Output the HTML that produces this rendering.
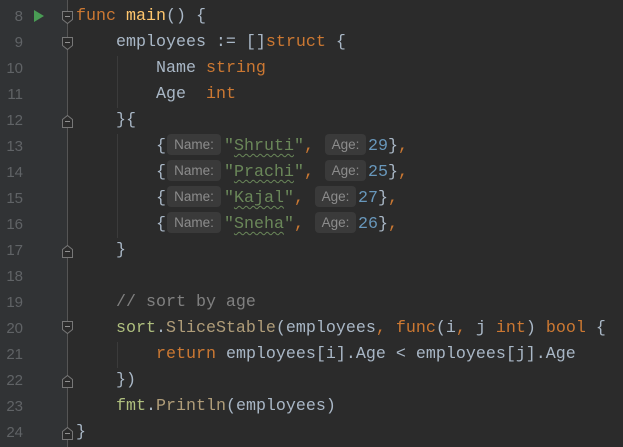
<!DOCTYPE html>
<html><head><style>
body{margin:0;width:623px;height:447px;background:#2b2b2b;overflow:hidden;position:relative;font-family:"Liberation Mono",monospace;font-size:16.67px;color:#a9b7c6}
.l{position:absolute;left:76px;height:26px;line-height:26px;white-space:pre}
.n{position:absolute;left:0;width:23px;text-align:right;height:26px;line-height:26px;color:#606366;font-family:"Liberation Sans",sans-serif;font-size:15px}
.k{color:#cc7832}.f{color:#ffc66d}.s{color:#6a8759}.d{color:#6897bb}.c{color:#808080}.p{color:#afbf7e}.m{color:#b09d79}
.h{display:inline-block;background:#3a3a3a;color:#8c8c8c;font-family:"Liberation Sans",sans-serif;font-size:13.5px;line-height:21px;height:21px;border-radius:4px;text-align:center;vertical-align:1px}
.w{text-decoration:underline wavy #6a8759;text-underline-offset:3px;text-decoration-thickness:1px}
.g{position:absolute;width:1px;background:#3b3b3b}
</style></head><body>
<svg style="position:absolute;left:0;top:0" width="623" height="447">
<rect x="0" y="0" width="67" height="447" fill="#313335"/>
<line x1="67.5" y1="0" x2="67.5" y2="447" stroke="#555" stroke-width="1"/>
<polygon points="34,10 44,16 34,22" fill="#499c54"/>
<g fill="#2b2b2b" stroke="#777" stroke-width="1">
<path d="M62.5,11.5h10v8l-5,4l-5,-4z"/><path d="M62.5,37.5h10v8l-5,4l-5,-4z"/>
<path d="M62.5,321.5h10v8l-5,4l-5,-4z"/>
<path d="M62.5,127.5h10v-8l-5,-4l-5,4z"/><path d="M62.5,257.5h10v-8l-5,-4l-5,4z"/>
<path d="M62.5,387.5h10v-8l-5,-4l-5,4z"/><path d="M62.5,439.5h10v-8l-5,-4l-5,4z"/>
</g>
<g stroke="#909090"><line x1="65" y1="16.5" x2="70" y2="16.5"/><line x1="65" y1="42.5" x2="70" y2="42.5"/><line x1="65" y1="326.5" x2="70" y2="326.5"/><line x1="65" y1="121.5" x2="70" y2="121.5"/><line x1="65" y1="251.5" x2="70" y2="251.5"/><line x1="65" y1="381.5" x2="70" y2="381.5"/><line x1="65" y1="433.5" x2="70" y2="433.5"/></g>
</svg>
<div class="g" style="left:117px;top:56px;height:52px"></div>
<div class="g" style="left:117px;top:134px;height:104px"></div>
<div class="g" style="left:117px;top:342px;height:26px"></div>
<div class="n" style="top:4px">8</div><div class="n" style="top:30px">9</div><div class="n" style="top:56px">10</div><div class="n" style="top:82px">11</div><div class="n" style="top:108px">12</div><div class="n" style="top:134px">13</div><div class="n" style="top:160px">14</div><div class="n" style="top:186px">15</div><div class="n" style="top:212px">16</div><div class="n" style="top:238px">17</div><div class="n" style="top:264px">18</div><div class="n" style="top:290px">19</div><div class="n" style="top:316px">20</div><div class="n" style="top:342px">21</div><div class="n" style="top:368px">22</div><div class="n" style="top:394px">23</div><div class="n" style="top:420px">24</div>
<div class="l" style="top:4px"><span class="k">func</span> <span class="f">main</span>() {</div>
<div class="l" style="top:30px">    employees := []<span class="k">struct</span> {</div>
<div class="l" style="top:56px">        Name <span class="k">string</span></div>
<div class="l" style="top:82px">        Age  <span class="k">int</span></div>
<div class="l" style="top:108px">    }{</div>
<div class="l" style="top:134px">        {<span class="h" style="width:54px;margin:0 3px 0 1px">Name:</span><span class="s">"<span class="w">Shruti</span>"</span><span class="k">,</span> <span class="h" style="width:41px;margin:0 2px 0 1px">Age:</span><span class="d">29</span>}<span class="k">,</span></div>
<div class="l" style="top:160px">        {<span class="h" style="width:54px;margin:0 3px 0 1px">Name:</span><span class="s">"<span class="w">Prachi</span>"</span><span class="k">,</span> <span class="h" style="width:41px;margin:0 2px 0 1px">Age:</span><span class="d">25</span>}<span class="k">,</span></div>
<div class="l" style="top:186px">        {<span class="h" style="width:54px;margin:0 3px 0 1px">Name:</span><span class="s">"<span class="w">Kajal</span>"</span><span class="k">,</span> <span class="h" style="width:41px;margin:0 2px 0 1px">Age:</span><span class="d">27</span>}<span class="k">,</span></div>
<div class="l" style="top:212px">        {<span class="h" style="width:54px;margin:0 3px 0 1px">Name:</span><span class="s">"<span class="w">Sneha</span>"</span><span class="k">,</span> <span class="h" style="width:41px;margin:0 2px 0 1px">Age:</span><span class="d">26</span>}<span class="k">,</span></div>
<div class="l" style="top:238px">    }</div>
<div class="l" style="top:290px">    <span class="c">// sort by age</span></div>
<div class="l" style="top:316px">    <span class="p">sort</span>.<span class="m">SliceStable</span>(employees<span class="k">,</span> <span class="k">func</span>(i<span class="k">,</span> j <span class="k">int</span>) <span class="k">bool</span> {</div>
<div class="l" style="top:342px">        <span class="k">return</span> employees[i].Age &lt; employees[j].Age</div>
<div class="l" style="top:368px">    })</div>
<div class="l" style="top:394px">    <span class="p">fmt</span>.<span class="m">Println</span>(employees)</div>
<div class="l" style="top:420px">}</div>
</body></html>
